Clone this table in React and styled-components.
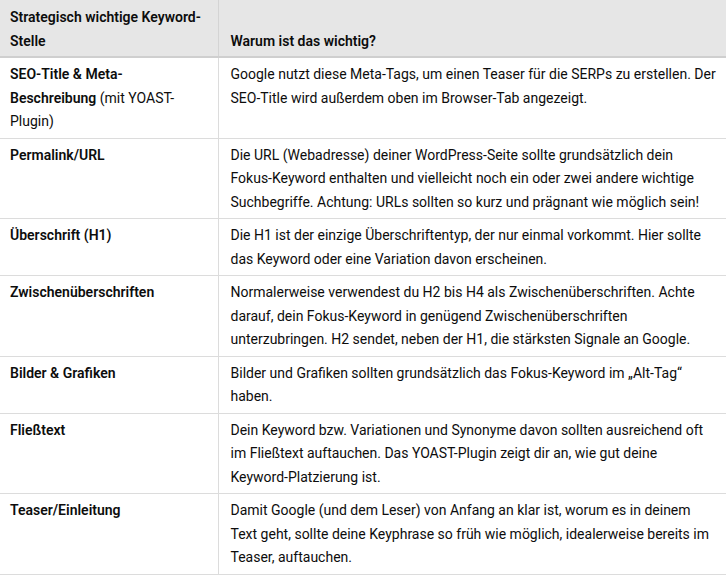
import React from "react";
import styled, { createGlobalStyle } from "styled-components";

const Global = createGlobalStyle`
  html, body { margin: 0; padding: 0; background: #ffffff; }
  body { font-family: Roboto, Inter, "Liberation Sans", sans-serif; color: #0d0d0d; }
`;

const Table = styled.table`
  width: 100%;
  border-collapse: collapse;
  table-layout: fixed;
  font-size: 14px;
  line-height: 23.5px;
`;

const Col = styled.col`
  width: ${(p) => p.$w || "auto"};
`;

const Head = styled.thead`
  background: #e6e6e6;
`;

const Th = styled.th`
  text-align: left;
  vertical-align: bottom;
  font-weight: 600;
  line-height: 24px;
  padding: 5px ${(p) => (p.$first ? "12px" : "6px")} 3px ${(p) => (p.$first ? "10px" : "12px")};
  border-bottom: 2px solid #cfcfcf;
  border-right: ${(p) => (p.$first ? "1px solid #d4d4d4" : "none")};
`;

const Td = styled.td`
  vertical-align: top;
  padding: 5px ${(p) => (p.$first ? "12px" : "6px")} 4px ${(p) => (p.$first ? "10px" : "12px")};
  border-bottom: 1px solid #dcdcdc;
  border-right: ${(p) => (p.$first ? "1px solid #dcdcdc" : "none")};
  font-weight: 400;
`;

const Strong = styled.strong`
  font-weight: 600;
`;

const Compound = styled.span`
  white-space: nowrap;
`;

const rows = [
  {
    k: (
      <>
        <Strong>SEO-Title &amp; Meta-Beschreibung</Strong> (mit YOAST-Plugin)
      </>
    ),
    v: "Google nutzt diese Meta-Tags, um einen Teaser für die SERPs zu erstellen. Der SEO-Title wird außerdem oben im Browser-Tab angezeigt.",
  },
  {
    k: <Strong>Permalink/URL</Strong>,
    v: (
      <>
        Die URL (Webadresse) deiner WordPress-Seite sollte grundsätzlich dein{" "}
        <Compound>Fokus-Keyword</Compound> enthalten und vielleicht noch ein oder zwei andere wichtige
        Suchbegriffe. Achtung: URLs sollten so kurz und prägnant wie möglich sein!
      </>
    ),
  },
  {
    k: <Strong>Überschrift (H1)</Strong>,
    v: "Die H1 ist der einzige Überschriftentyp, der nur einmal vorkommt. Hier sollte das Keyword oder eine Variation davon erscheinen.",
  },
  {
    k: <Strong>Zwischenüberschriften</Strong>,
    v: "Normalerweise verwendest du H2 bis H4 als Zwischenüberschriften. Achte darauf, dein Fokus-Keyword in genügend Zwischenüberschriften unterzubringen. H2 sendet, neben der H1, die stärksten Signale an Google.",
  },
  {
    k: <Strong>Bilder &amp; Grafiken</Strong>,
    v: "Bilder und Grafiken sollten grundsätzlich das Fokus-Keyword im „Alt-Tag“ haben.",
  },
  {
    k: <Strong>Fließtext</Strong>,
    v: (
      <>
        Dein Keyword bzw. Variationen und Synonyme davon sollten ausreichend oft im Fließtext
        auftauchen. Das YOAST-Plugin zeigt dir an, wie gut deine{" "}
        <Compound>Keyword-Platzierung</Compound> ist.
      </>
    ),
  },
  {
    k: <Strong>Teaser/Einleitung</Strong>,
    v: "Damit Google (und dem Leser) von Anfang an klar ist, worum es in deinem Text geht, sollte deine Keyphrase so früh wie möglich, idealerweise bereits im Teaser, auftauchen.",
  },
];

export default function App() {
  return (
    <>
      <Global />
      <Table>
        <colgroup>
          <Col $w="218px" />
          <Col />
        </colgroup>
        <Head>
          <tr>
            <Th $first>Strategisch wichtige Keyword-Stelle</Th>
            <Th>Warum ist das wichtig?</Th>
          </tr>
        </Head>
        <tbody>
          {rows.map((r, i) => (
            <tr key={i}>
              <Td $first>{r.k}</Td>
              <Td>{r.v}</Td>
            </tr>
          ))}
        </tbody>
      </Table>
    </>
  );
}
